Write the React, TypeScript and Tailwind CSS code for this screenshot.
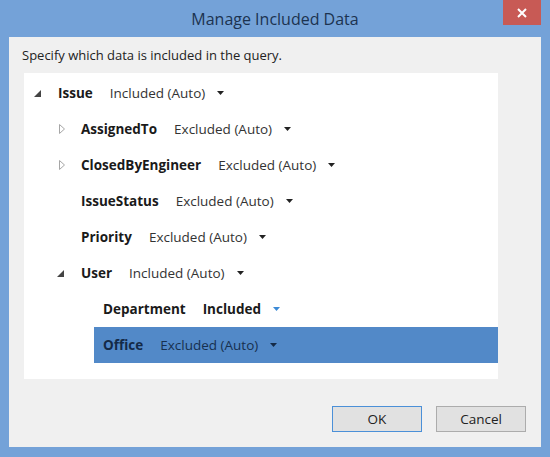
import React from "react";

type Node = {
  name: string;
  value: string;
  level: number;
  expander?: "open" | "closed";
  strong?: boolean;
  selected?: boolean;
};

const rows: Node[] = [
  { name: "Issue", value: "Included (Auto)", level: 0, expander: "open" },
  { name: "AssignedTo", value: "Excluded (Auto)", level: 1, expander: "closed" },
  { name: "ClosedByEngineer", value: "Excluded (Auto)", level: 1, expander: "closed" },
  { name: "IssueStatus", value: "Excluded (Auto)", level: 1 },
  { name: "Priority", value: "Excluded (Auto)", level: 1 },
  { name: "User", value: "Included (Auto)", level: 1, expander: "open" },
  { name: "Department", value: "Included", level: 2, strong: true },
  { name: "Office", value: "Excluded (Auto)", level: 2, selected: true },
];

// indent per level, in px from the panel's left edge
const indent = ["ml-[2px]", "ml-[25px]", "ml-[47px]"];

function Expander({ kind }: { kind?: "open" | "closed" }) {
  return (
    <span className="flex h-full w-[15px] items-center justify-start">
      {kind === "open" && (
        <svg width="7" height="7" viewBox="0 0 7 7">
          <path d="M7 0 L7 7 L0 7 Z" fill="#444" />
        </svg>
      )}
      {kind === "closed" && (
        <svg width="6" height="10" viewBox="0 0 6 10" className="ml-[2px]">
          <path d="M0.5 0.5 L5.5 5 L0.5 9.5 Z" fill="none" stroke="#a6a6a6" strokeWidth="1" />
        </svg>
      )}
    </span>
  );
}

function Row({ row }: { row: Node }) {
  return (
    <div className={`flex h-[36px] items-center ${indent[row.level]}`}>
      <span className="ml-[8px] flex h-full">
        <Expander kind={row.expander} />
      </span>
      <div
        className={`flex h-full flex-1 items-center pl-[9px] ${
          row.selected ? "bg-[#5289c8] text-[#142a47]" : "text-[#1a1a1a]"
        }`}
      >
        <span className="font-bold">{row.name}</span>
        <span
          className={`ml-[17px] ${
            row.strong ? "font-bold" : row.selected ? "text-[#17304f]" : "text-[#333]"
          }`}
        >
          {row.value}
        </span>
        <svg width="7" height="4" viewBox="0 0 7 4" className="ml-[12px]">
          <path d="M0 0 L7 0 L3.5 4 Z" fill={row.strong ? "#3c8ad6" : row.selected ? "#142a47" : "#222"} />
        </svg>
      </div>
    </div>
  );
}

export default function App() {
  return (
    <div
      className="flex h-[457px] w-[550px] flex-col bg-[#74a2d8] text-[13.5px]"
      style={{ fontFamily: '"Open Sans", "Noto Sans", sans-serif' }}
    >
      <div className="relative flex h-[37px] items-center justify-center">
        <span className="pt-[1px] text-[16px] text-[#1c3350]">Manage Included Data</span>
        <div className="absolute right-[9px] top-0 flex h-[25px] w-[38px] items-center justify-center bg-[#c85a55]">
          <svg width="10" height="10" viewBox="0 0 10 10">
            <path d="M1 1 L9 9 M9 1 L1 9" stroke="#fff" strokeWidth="2" />
          </svg>
        </div>
      </div>

      <div className="mx-[9px] mb-[10px] flex flex-1 flex-col bg-[#f0f0f0]">
        <div className="ml-[13px] mt-[9px] h-[20px] text-[13px] text-[#222]">
          Specify which data is included in the query.
        </div>
        <div className="ml-[15px] mt-[7px] h-[306px] w-[474px] bg-white pt-[2px]">
          {rows.map((r) => (
            <Row key={r.name} row={r} />
          ))}
        </div>
        <div className="mr-[15px] mt-[27px] flex justify-end gap-[14px]">
          <button className="h-[26px] w-[90px] border border-[#4b90d8] bg-[#e1e1e1] text-[#222]">
            OK
          </button>
          <button className="h-[26px] w-[90px] border border-[#acacac] bg-[#e1e1e1] text-[#222]">
            Cancel
          </button>
        </div>
      </div>
    </div>
  );
}
